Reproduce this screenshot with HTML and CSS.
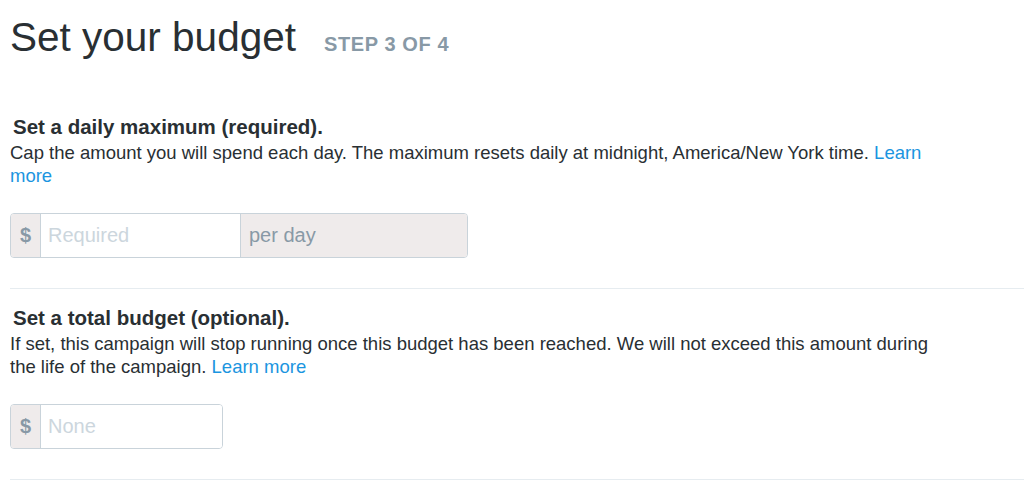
FILE: index.html
```html
<!DOCTYPE html>
<html>
<head>
    <title>Set your budget</title>
    <link rel="stylesheet" href="styles.css">
</head>
<body>
    <div class="page">
        <div class="page-header">
            <h1>Set your budget</h1>
            <span class="step">STEP 3 OF 4</span>
        </div>

        <div class="section first">
            <h3>Set a daily maximum (required).</h3>
            <p class="help">Cap the amount you will spend each day. The maximum resets daily at midnight, America/New York time. <a href="#">Learn more</a></p>
            <div class="input-group daily">
                <span class="addon currency">$</span>
                <input type="text" placeholder="Required">
                <span class="addon suffix">per day</span>
            </div>
        </div>

        <div class="section">
            <h3>Set a total budget (optional).</h3>
            <p class="help">If set, this campaign will stop running once this budget has been reached. We will not exceed this amount during the life of the campaign. <a href="#">Learn more</a></p>
            <div class="input-group total">
                <span class="addon currency">$</span>
                <input type="text" placeholder="None">
            </div>
        </div>
    </div>
</body>
</html>
```

FILE: styles.css
```css
body {
    font-family: "Liberation Sans", Arial, sans-serif;
    color: #292f33;
    background-color: #ffffff;
    margin: 0;
    padding: 0;
}
.page {
    padding-left: 10px;
}
.page-header {
    display: flex;
    align-items: baseline;
    gap: 28px;
    padding-top: 13px;
}
.page-header h1 {
    margin: 0;
    font-size: 40.5px;
    font-weight: normal;
    line-height: 48px;
}
.step {
    font-size: 20px;
    font-weight: bold;
    color: #8899a6;
    letter-spacing: 0.6px;
}
.section {
    padding: 17px 0 30px;
    border-bottom: 1px solid #e6ecf0;
}
.section.first {
    margin-top: 37px;
}
.section h3 {
    margin: 0 0 2px 3px;
    font-size: 20.5px;
    line-height: 24px;
}
.help {
    margin: 0;
    max-width: 935px;
    font-size: 18.5px;
    line-height: 23px;
}
.help a {
    color: #1b95e0;
    text-decoration: none;
}
.input-group {
    display: flex;
    height: 45px;
    margin-top: 26px;
    border: 1px solid #c9d3da;
    border-radius: 4px;
    box-sizing: border-box;
    overflow: hidden;
}
.input-group.daily {
    width: 458px;
}
.input-group.total {
    width: 213px;
}
.addon {
    display: flex;
    flex: none;
    align-items: center;
    background-color: #efebeb;
    color: #8899a6;
    font-size: 20px;
}
.currency {
    width: 29px;
    justify-content: center;
    font-weight: bold;
    border-right: 1px solid #c9d3da;
}
.suffix {
    flex: 1;
    padding-left: 8px;
    border-left: 1px solid #c9d3da;
}
.input-group input {
    width: 199px;
    flex: none;
    min-width: 0;
    border: none;
    outline: none;
    padding: 0 7px;
    box-sizing: border-box;
    font-family: inherit;
    font-size: 20px;
    color: #292f33;
}
.input-group.total input {
    flex: 1;
}
.input-group input::placeholder {
    color: #ccd6dd;
}
```
